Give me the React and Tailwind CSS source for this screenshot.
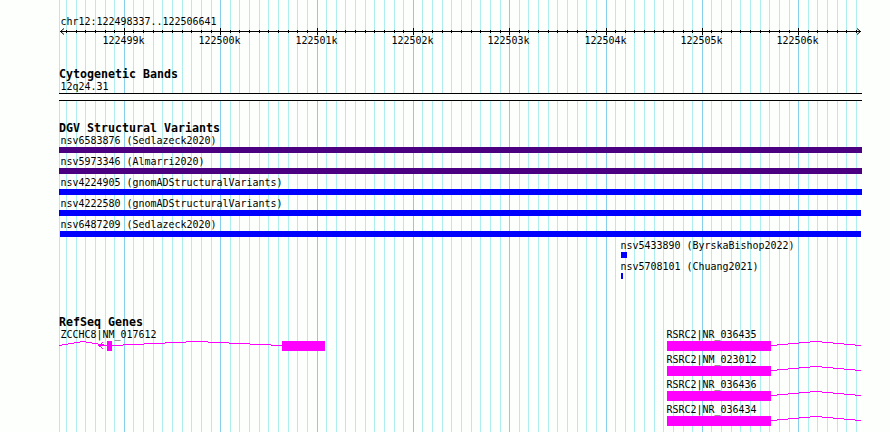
const REGION_START = 122498337;
const ORIGIN = 60;
const PX_PER_BP = 0.09633;

const toX = (bp) => Math.round(ORIGIN + (bp - REGION_START) * PX_PER_BP);

const ticks = Array.from({ length: 83 }, (_, i) => {
  const bp = 122498400 + i * 100;
  return { bp, x: toX(bp), major: bp % 1000 === 0 };
});

const variants = [
  { name: 'nsv6583876 (Sedlazeck2020)', start: 59, end: 862, color: 'bg-[#4b0082]' },
  { name: 'nsv5973346 (Almarri2020)', start: 59, end: 862, color: 'bg-[#4b0082]' },
  { name: 'nsv4224905 (gnomADStructuralVariants)', start: 59, end: 862, color: 'bg-[#0000ff]' },
  { name: 'nsv4222580 (gnomADStructuralVariants)', start: 59, end: 861, color: 'bg-[#0000ff]' },
  { name: 'nsv6487209 (Sedlazeck2020)', start: 60, end: 861, color: 'bg-[#0000ff]' },
  { name: 'nsv5433890 (ByrskaBishop2022)', start: 621, end: 627, color: 'bg-[#0000ff]' },
  { name: 'nsv5708101 (Chuang2021)', start: 621, end: 623, color: 'bg-[#0000ff]' },
];

const rsrc2 = {
  labelX: 666.5,
  exons: [[667, 771]],
  introns: [[771, 861]],
};

const geneRows = [
  [
    {
      name: 'ZCCHC8|NM_017612',
      labelX: 60.5,
      exons: [[107, 112], [282, 325]],
      introns: [[59, 107], [112, 282]],
      arrow: 99,
    },
    { ...rsrc2, name: 'RSRC2|NR_036435' },
  ],
  [{ ...rsrc2, name: 'RSRC2|NM_023012' }],
  [{ ...rsrc2, name: 'RSRC2|NR_036436' }],
  [{ ...rsrc2, name: 'RSRC2|NR_036434' }],
];

const Label = ({ x = 60.5, children }) => (
  <div
    className="h-[13px] origin-[0_10px] scale-y-110 text-[9.97px] leading-[13px] whitespace-pre"
    style={{ paddingLeft: x }}
  >
    {children}
  </div>
);

const Heading = ({ children }) => (
  <h2 className="h-[13px] pl-[59px] text-[11.63px] leading-[15px] font-bold whitespace-pre">
    {children}
  </h2>
);

const GridLines = () => (
  <svg className="absolute inset-0" width="890" height="432" shapeRendering="crispEdges">
    <rect x="59" y="0" width="1" height="432" fill="#afeeee" />
    {ticks.map(({ bp, x, major }) => (
      <rect key={bp} x={x} y="0" width="1" height="432" fill={major ? '#87ceeb' : '#afeeee'} />
    ))}
  </svg>
);

const Ruler = () => (
  <svg className="block" width="890" height="20">
    <g shapeRendering="crispEdges">
      <rect x="60" y="3" width="801" height="1" />
      {ticks.map(({ bp, x, major }) => (
        <rect key={bp} x={x} y={major ? 0 : 2} width="1" height={major ? 7 : 3} />
      ))}
    </g>
    <path d="M64 0.5 L60.5 3.5 L64 6.5 M857 0.5 L860.5 3.5 L857 6.5" fill="none" stroke="#000" />
    {ticks.filter((t) => t.major).map(({ bp, x }) => (
      <text
        key={bp}
        x={x - 21.5}
        y="0"
        fontSize="9.97"
        transform="translate(0 16) scale(1 1.1)"
      >
        {bp / 1000}k
      </text>
    ))}
  </svg>
);

// Intron hat drawn as one-pixel steps: up over four rows, then back down
const Intron = ({ from, to }) => {
  const step = (to - from) / 8;
  return [4, 3, 2, 1, 0, 1, 2, 3, 4].map((y, i) => {
    const left = Math.round(from + Math.max(0, i - 0.5) * step);
    const right = Math.round(from + Math.min(8, i + 0.5) * step);
    return <rect key={i} x={left} y={y} width={right - left} height="1" />;
  });
};

const GeneRow = ({ genes }) => (
  <div className="mb-0.5">
    <div className="grid">
      {genes.map((gene) => (
        <div key={gene.name} className="[grid-area:1/1]">
          <Label x={gene.labelX}>{gene.name}</Label>
        </div>
      ))}
    </div>
    <svg className="block" width="890" height="10" fill="#ff00ff" shapeRendering="crispEdges">
      {genes.map((gene) => (
        <g key={gene.name}>
          {gene.introns.map(([a, b]) => (
            <Intron key={a} from={a} to={b} />
          ))}
          {gene.exons.map(([a, b]) => (
            <rect key={a} x={a} y="0" width={b - a} height="10" />
          ))}
          {gene.arrow && (
            <path
              d={`M${gene.arrow + 4} 1 l-4 3.5 l4 3.5 M${gene.arrow} 4.5 h8`}
              fill="none"
              stroke="#ff00ff"
            />
          )}
        </g>
      ))}
    </svg>
  </div>
);

export default function App() {
  return (
    <div className="relative h-[432px] w-[890px] overflow-hidden bg-[#fdfffc] font-['DejaVu_Sans_Mono',monospace] text-black">
      <GridLines />
      <div className="relative pt-[15px]">
        <section>
          <Label>chr12:122498337..122506641</Label>
          <Ruler />
        </section>

        <section className="pt-[19px]">
          <Heading>Cytogenetic Bands</Heading>
          <Label>12q24.31</Label>
          <div className="ml-[59px] h-2 w-[803px] border-y border-black bg-[#fdfffc]" />
        </section>

        <section className="pt-5">
          <Heading>DGV Structural Variants</Heading>
          {variants.map(({ name, start, end, color }) => (
            <div key={name} className="mb-0.5">
              <Label x={start > 60 ? start - 0.5 : 60.5}>{name}</Label>
              <div className={`h-1.5 ${color}`} style={{ marginLeft: start, width: end - start }} />
            </div>
          ))}
        </section>

        <section className="pt-[34px]">
          <Heading>RefSeq Genes</Heading>
          {geneRows.map((genes, i) => (
            <GeneRow key={i} genes={genes} />
          ))}
        </section>
      </div>
    </div>
  );
}
